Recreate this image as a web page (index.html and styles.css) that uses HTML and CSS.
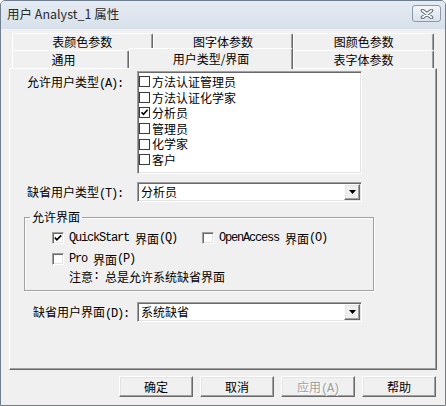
FILE: index.html
```html
<!DOCTYPE html>
<html lang="zh-CN">
<head>
<meta charset="utf-8">
<title>用户 Analyst_1 属性</title>
<link rel="stylesheet" href="styles.css">
</head>
<body>
<div class="window">
  <div class="titlebar">
    <span class="title">用户 Analyst_1 属性</span>
    <div class="close">
      <svg width="14" height="10" viewBox="0 0 14 10">
        <path d="M2.5 1.5 L11.5 8.5 M11.5 1.5 L2.5 8.5" stroke="#5b6b7e" stroke-width="3.6" stroke-linecap="round" fill="none"/>
        <path d="M2.5 1.5 L11.5 8.5 M11.5 1.5 L2.5 8.5" stroke="#ffffff" stroke-width="1.6" stroke-linecap="round" fill="none"/>
      </svg>
    </div>
  </div>
  <div class="client">
    <div class="tabs">
      <div class="tabrow back">
        <div class="tab">表颜色参数</div>
        <div class="tab">图字体参数</div>
        <div class="tab">图颜色参数</div>
      </div>
      <div class="tabrow front">
        <div class="tab t-general">通用</div>
        <div class="tab t-active">用户类型/界面</div>
        <div class="tab t-font">表字体参数</div>
      </div>
    </div>
    <div class="panel">
      <div class="row row-list">
        <div class="lbl">允许用户类型<span class="mono">(A):</span></div>
        <div class="listbox sunken">
          <div class="item"><span class="cb"></span>方法认证管理员</div>
          <div class="item"><span class="cb"></span>方法认证化学家</div>
          <div class="item"><span class="cb"><svg width="9" height="9" viewBox="0 0 9 9"><path d="M1.5 4.2 L3.5 6.4 L7.6 1.8" stroke="#000" stroke-width="1.6" fill="none"/></svg></span>分析员</div>
          <div class="item"><span class="cb"></span>管理员</div>
          <div class="item"><span class="cb"></span>化学家</div>
          <div class="item"><span class="cb"></span>客户</div>
        </div>
      </div>
      <div class="row row-combo">
        <div class="lbl lbl-combo">缺省用户类型<span class="mono">(T):</span></div>
        <div class="combo sunken">
          <span class="combo-text">分析员</span>
          <span class="drop raised"><svg width="7" height="4" viewBox="0 0 7 4"><path d="M0 0 H7 L3.5 4 Z" fill="#000"/></svg></span>
        </div>
      </div>
      <fieldset class="group">
        <legend>允许界面</legend>
        <div class="grow">
          <div class="chk"><span class="cb3d sunken"><svg width="10" height="10" viewBox="0 0 10 10"><path d="M1.8 4.6 L3.9 6.8 L8.2 2.3" stroke="#000" stroke-width="1.7" fill="none"/></svg></span><span class="mono">QuickStart </span>界面<span class="mono">(Q)</span></div>
          <div class="chk"><span class="cb3d sunken"></span><span class="mono">OpenAccess </span>界面<span class="mono">(O)</span></div>
        </div>
        <div class="grow grow-2">
          <div class="chk"><span class="cb3d sunken"></span><span class="mono">Pro </span>界面<span class="mono">(P)</span></div>
        </div>
        <div class="grow grow-note">注意<span class="mono">: </span>总是允许系统缺省界面</div>
      </fieldset>
      <div class="row row-combo2">
        <div class="lbl lbl-combo lbl-ui">缺省用户界面<span class="mono">(D):</span></div>
        <div class="combo sunken">
          <span class="combo-text">系统缺省</span>
          <span class="drop raised"><svg width="7" height="4" viewBox="0 0 7 4"><path d="M0 0 H7 L3.5 4 Z" fill="#000"/></svg></span>
        </div>
      </div>
    </div>
    <div class="buttons">
      <div class="btn raised">确定</div>
      <div class="btn raised">取消</div>
      <div class="btn raised btn-disabled">应用<span class="mono">(A)</span></div>
      <div class="btn raised">帮助</div>
    </div>
  </div>
</div>
</body>
</html>
```
FILE: styles.css
```css
html, body {
  margin: 0;
  padding: 0;
  background: #ffffff;
}
body {
  font-family: "Noto Sans CJK SC", "Noto Sans", sans-serif;
  font-size: 12px;
  color: #000;
}
.window {
  width: 446px;
  height: 406px;
  box-sizing: border-box;
  border: 1px solid #707d8c;
  border-radius: 5px 5px 0 0;
  background: #f0f0f0;
  display: flex;
  flex-direction: column;
  overflow: hidden;
}
.titlebar {
  height: 28px;
  flex: none;
  display: flex;
  align-items: flex-start;
  padding: 0 4px 0 6px;
  background: linear-gradient(#e5ebf2, #d7e0ea);
}
.title {
  font-size: 12.5px;
  line-height: 26px;
  color: #2a2a2a;
}
.close {
  margin-left: auto;
  margin-top: 4px;
  width: 29px;
  height: 17px;
  box-sizing: border-box;
  border: 1px solid #8a99ab;
  border-radius: 3px;
  background: linear-gradient(#f3f6f9, #dbe2ea);
  display: flex;
  align-items: center;
  justify-content: center;
}
.client {
  flex: 1;
  padding: 4px 8px 0 8px;
  display: flex;
  flex-direction: column;
}
.tabs {
  margin: 0 3px;
}
.tabrow {
  display: flex;
}
.back {
  height: 17px;
}
.front {
  height: 18px;
}
.tab {
  box-sizing: border-box;
  border-top: 1px solid #fff;
  border-left: 1px solid #fff;
  border-right: 1px solid #696969;
  box-shadow: inset -1px 0 #a0a0a0;
  border-radius: 2px 2px 0 0;
  background: #f0f0f0;
  text-align: center;
  white-space: nowrap;
}
.back .tab {
  flex: 1;
  line-height: 15px;
  padding-top: 0;
}
.front .tab {
  flex: none;
  line-height: 16px;
  padding-top: 1px;
}
.t-general {
  width: 117px;
  padding-right: 14px;
}
.front .t-active {
  width: 164px;
  height: 21px;
  margin-top: -2px;
  padding-top: 2px;
  position: relative;
  z-index: 1;
}
.t-font {
  width: 141px;
}
.panel {
  box-sizing: border-box;
  height: 302px;
  border: 1px solid;
  border-color: #fff #696969 #696969 #fff;
  box-shadow: inset -1px -1px #a0a0a0;
  padding: 2px 0 0 14px;
}
.sunken {
  border: 1px solid;
  border-color: #a0a0a0 #fff #fff #a0a0a0;
  box-shadow: inset 1px 1px #696969, inset -1px -1px #e3e3e3;
}
.raised {
  border: 1px solid;
  border-color: #fff #696969 #696969 #fff;
  box-shadow: inset -1px -1px #a0a0a0, inset 1px 1px #e3e3e3;
}
.row {
  display: flex;
}
.lbl {
  width: 110px;
  margin-left: 3px;
  flex: none;
  white-space: nowrap;
}
.row-list .lbl {
  line-height: 16px;
  padding-top: 3px;
}
.listbox {
  width: 225px;
  height: 103px;
  box-sizing: border-box;
  background: #fff;
  padding: 2px 0 0 1px;
}
.item {
  display: flex;
  align-items: center;
  height: 15.6px;
  line-height: 15.6px;
  white-space: nowrap;
}
.cb {
  width: 11px;
  height: 11px;
  box-sizing: border-box;
  border: 1px solid #3a3a3a;
  background: #fff;
  margin-right: 2px;
  flex: none;
  display: flex;
}
.row-combo {
  margin-top: 8px;
}
.row-combo2 {
  margin-top: 11px;
}
.lbl-combo {
  line-height: 20px;
}
.lbl-ui {
  width: 104px;
  margin-left: 9px;
}
.combo {
  width: 225px;
  height: 20px;
  box-sizing: border-box;
  background: #fff;
  display: flex;
  padding: 1px;
}
.combo-text {
  flex: 1;
  line-height: 16px;
  padding-left: 2px;
}
.drop {
  width: 16px;
  height: 16px;
  box-sizing: border-box;
  background: #f0f0f0;
  display: flex;
  align-items: center;
  justify-content: center;
}
.group {
  width: 350px;
  box-sizing: border-box;
  margin: 6px 0 0 0;
  padding: 6px 0 6px 0;
  border: 1px solid #a0a0a0;
  box-shadow: inset 1px 1px #fff, 1px 1px #fff;
  min-width: 0;
}
.group legend {
  margin-left: 5px;
  padding: 0 2px;
  line-height: 14px;
}
.grow {
  display: flex;
  height: 16px;
  align-items: center;
  padding-left: 27px;
  white-space: nowrap;
}
.grow-2 {
  margin-top: 5px;
}
.grow-note {
  margin-top: 1px;
  padding-left: 44px;
}
.chk {
  display: flex;
  align-items: center;
  width: 150px;
  flex: none;
}
.cb3d {
  width: 12px;
  height: 12px;
  box-sizing: border-box;
  background: #fff;
  margin-right: 5px;
  flex: none;
  display: flex;
}
.mono {
  font-family: "Liberation Mono", monospace;
  font-size: 12px;
  letter-spacing: -1.2px;
  white-space: pre;
}
.buttons {
  display: flex;
  justify-content: flex-end;
  gap: 7px;
  margin-top: 6px;
  margin-right: 1px;
}
.btn {
  width: 74px;
  height: 21px;
  box-sizing: border-box;
  background: #f0f0f0;
  text-align: center;
  line-height: 19px;
}
.btn-disabled {
  color: #a0a0a0;
  text-shadow: 1px 1px #fff;
}
```
